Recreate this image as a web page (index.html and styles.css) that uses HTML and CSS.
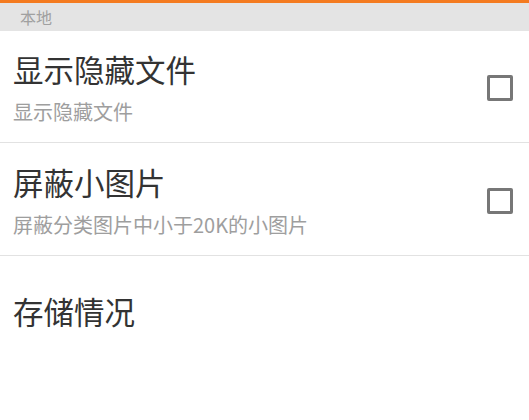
FILE: index.html
```html
<!DOCTYPE html>
<html lang="zh-CN">
<head>
    <meta charset="UTF-8">
    <meta name="viewport" content="width=device-width, initial-scale=1.0">
    <title>设置</title>
    <link rel="stylesheet" href="styles.css">
</head>
<body>
    <div class="section-header">本地</div>
    <div class="pref-row">
        <div class="pref-text">
            <div class="pref-title">显示隐藏文件</div>
            <div class="pref-summary">显示隐藏文件</div>
        </div>
        <span class="checkbox"></span>
    </div>
    <div class="pref-row">
        <div class="pref-text">
            <div class="pref-title">屏蔽小图片</div>
            <div class="pref-summary">屏蔽分类图片中小于20K的小图片</div>
        </div>
        <span class="checkbox"></span>
    </div>
    <div class="pref-row single">
        <div class="pref-text">
            <div class="pref-title">存储情况</div>
        </div>
    </div>
</body>
</html>
```

FILE: styles.css
```css
:root {
    --accent-color: #f47b20;
    --header-bg: #e4e4e4;
    --title-color: #333333;
    --summary-color: #9e9e9e;
    --divider-color: #e2e2e2;
}
body {
    margin: 0;
    font-family: "Noto Sans CJK SC", "Noto Sans", sans-serif;
    background-color: #ffffff;
    border-top: 3px solid var(--accent-color);
}
.section-header {
    background-color: var(--header-bg);
    color: #a0a0a0;
    font-size: 16px;
    line-height: 29px;
    height: 28px;
    padding-left: 20px;
}
.pref-row {
    display: flex;
    align-items: center;
    justify-content: space-between;
    padding: 20px 16px 17px 13px;
    border-bottom: 1px solid var(--divider-color);
}
.pref-row + .pref-row {
    padding-top: 21px;
}
.pref-row.single {
    border-bottom: none;
    padding-top: 37px;
}
.pref-title {
    color: var(--title-color);
    font-size: 30.5px;
    line-height: 37px;
}
.pref-summary {
    color: var(--summary-color);
    font-size: 20px;
    line-height: 26px;
    margin-top: 11px;
}
.checkbox {
    width: 20px;
    height: 20px;
    border: 3px solid #777777;
    border-radius: 2px;
}
```
